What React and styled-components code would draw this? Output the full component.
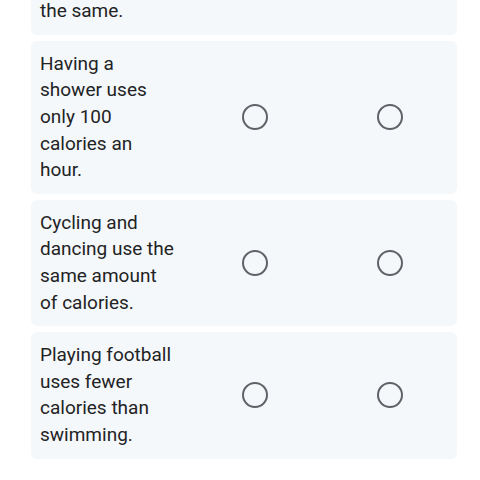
import styled, { createGlobalStyle } from "styled-components";

const GlobalStyle = createGlobalStyle`
  html, body {
    margin: 0;
    padding: 0;
    background: #ffffff;
    overflow: hidden;
  }
  body {
    font-family: Roboto, "Liberation Sans", sans-serif;
  }
`;

const statements = [
  "Sitting and standing use the same.",
  "Having a shower uses only 100 calories an hour.",
  "Cycling and dancing use the same amount of calories.",
  "Playing football uses fewer calories than swimming.",
];

export default function App() {
  return (
    <>
      <GlobalStyle />
      <List>
        {statements.map((text) => (
          <Row key={text}>
            <Statement>{text}</Statement>
            <Cell>
              <Radio type="radio" name={text} aria-label="True" />
            </Cell>
            <Cell>
              <Radio type="radio" name={text} aria-label="False" />
            </Cell>
          </Row>
        ))}
      </List>
    </>
  );
}

const List = styled.div`
  display: flex;
  flex-direction: column;
  gap: 6px;
  width: 426px;
  margin-left: 31px;
  margin-top: -65px;
`;

const Row = styled.div`
  display: grid;
  grid-template-columns: 147px 135px 135px;
  align-items: center;
  padding: 10px 0 10px 9px;
  background: #f5f8fa;
  border-radius: 6px;
`;

const Statement = styled.div`
  font-size: 19px;
  line-height: 26.6px;
  color: #222325;
  padding-right: 10px;
`;

const Cell = styled.div`
  display: flex;
  justify-content: center;
  align-items: center;
`;

const Radio = styled.input`
  appearance: none;
  margin: 0;
  width: 26px;
  height: 26px;
  border: 2.5px solid #5f6368;
  border-radius: 50%;
  background: transparent;
  box-sizing: border-box;
`;
